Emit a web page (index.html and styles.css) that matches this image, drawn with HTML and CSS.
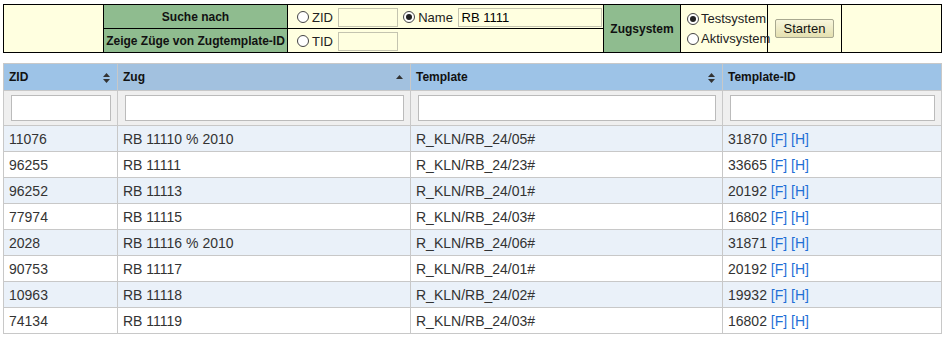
FILE: index.html
```html
<!DOCTYPE html>
<html lang="de">

<head>
    <meta charset="UTF-8">
    <title>Zugsuche</title>
    <link rel="stylesheet" href="styles.css">
</head>

<body>
    <table class="search">
        <colgroup>
            <col style="width: 100px">
            <col style="width: 184px">
            <col style="width: 316px">
            <col style="width: 77px">
            <col style="width: 87px">
            <col style="width: 74px">
            <col style="width: 100px">
        </colgroup>
        <tr>
            <td rowspan="2"></td>
            <td class="label">Suche nach</td>
            <td class="choice">
                <label class="opt"><input type="radio" name="mode">ZID</label>
                <input type="text" class="field small">
                <label class="opt name-opt"><input type="radio" name="mode" checked>Name</label>
                <input type="text" class="field wide" value="RB 1111">
            </td>
            <td class="label" rowspan="2">Zugsystem</td>
            <td class="system" rowspan="2">
                <label class="opt"><input type="radio" name="sys" checked>Testsystem</label>
                <label class="opt"><input type="radio" name="sys">Aktivsystem</label>
            </td>
            <td class="start" rowspan="2"><button>Starten</button></td>
            <td rowspan="2"></td>
        </tr>
        <tr>
            <td class="label">Zeige Züge von Zugtemplate-ID</td>
            <td class="choice">
                <label class="opt"><input type="radio" name="mode">TID</label>
                <input type="text" class="field small">
            </td>
        </tr>
    </table>

    <table class="results">
        <colgroup>
            <col style="width: 114px">
            <col style="width: 293px">
            <col style="width: 312px">
            <col style="width: 219px">
        </colgroup>
        <thead>
            <tr class="head">
                <th><span>ZID</span><svg class="sort" width="7" height="10" viewBox="0 0 7 10"><path d="M3.5 0 L7 4 L0 4 Z M0 6 L7 6 L3.5 10 Z" /></svg></th>
                <th class="sorted"><span>Zug</span><svg class="sort" width="7" height="10" viewBox="0 0 7 10"><path d="M3.5 2 L7 6 L0 6 Z" /></svg></th>
                <th><span>Template</span><svg class="sort" width="7" height="10" viewBox="0 0 7 10"><path d="M3.5 0 L7 4 L0 4 Z M0 6 L7 6 L3.5 10 Z" /></svg></th>
                <th><span>Template-ID</span></th>
            </tr>
            <tr class="filter">
                <td><input type="text"></td>
                <td><input type="text"></td>
                <td><input type="text"></td>
                <td><input type="text"></td>
            </tr>
        </thead>
        <tbody id="rows"></tbody>
    </table>

    <script>
        const trains = [
            ['11076', 'RB 11110 % 2010', 'R_KLN/RB_24/05#', '31870'],
            ['96255', 'RB 11111', 'R_KLN/RB_24/23#', '33665'],
            ['96252', 'RB 11113', 'R_KLN/RB_24/01#', '20192'],
            ['77974', 'RB 11115', 'R_KLN/RB_24/03#', '16802'],
            ['2028', 'RB 11116 % 2010', 'R_KLN/RB_24/06#', '31871'],
            ['90753', 'RB 11117', 'R_KLN/RB_24/01#', '20192'],
            ['10963', 'RB 11118', 'R_KLN/RB_24/02#', '19932'],
            ['74134', 'RB 11119', 'R_KLN/RB_24/03#', '16802']
        ];

        const rows = document.getElementById('rows');
        trains.forEach(train => {
            const tr = document.createElement('tr');
            tr.innerHTML = `<td>${train[0]}</td><td>${train[1]}</td><td>${train[2]}</td>` +
                `<td>${train[3]} <a href="#">[F]</a> <a href="#">[H]</a></td>`;
            rows.appendChild(tr);
        });
    </script>
</body>

</html>
```

FILE: styles.css
```css
* {
    box-sizing: border-box;
}

body {
    margin: 3px;
    font-family: 'Liberation Sans', Arial, sans-serif;
    color: #222;
    background-color: white;
}

table {
    border-collapse: collapse;
    table-layout: fixed;
    width: 938px;
}

/* Search bar */

.search {
    border: 1px solid #000;
    margin-top: 1px;
}

.search td {
    background-color: #ffffe0;
    border: 1px solid #000;
    height: 24px;
    padding: 0;
    font-size: 13px;
    white-space: nowrap;
}

.search .label {
    background-color: #8fbc8f;
    font-size: 12px;
    font-weight: bold;
    text-align: center;
    color: #111;
}

.search .choice {
    padding-left: 9px;
    line-height: 19px;
}

.choice .opt {
    display: inline-flex;
    align-items: center;
    vertical-align: middle;
}

.name-opt {
    margin-left: 2px;
}

.opt input {
    appearance: none;
    width: 12px;
    height: 12px;
    margin: 0 3px 0 0;
    border: 1px solid #444;
    border-radius: 50%;
    background-color: #fff;
    position: relative;
    flex: none;
}

.opt input:checked::after {
    content: '';
    position: absolute;
    left: 2px;
    top: 2px;
    width: 6px;
    height: 6px;
    border-radius: 50%;
    background-color: #222;
}

.field {
    height: 19px;
    border: 1px solid #c4c4b0;
    background-color: #ffffe0;
    font-family: 'Liberation Sans', Arial, sans-serif;
    font-size: 13px;
    padding: 0 3px;
    vertical-align: middle;
    margin: 0 0 0 1px;
}

.field.small {
    width: 60px;
}

.field.wide {
    width: 144px;
}

.search .system {
    padding-left: 6px;
}

.system .opt {
    display: flex;
    align-items: center;
    line-height: 20px;
}

.system .opt input {
    margin-right: 2px;
}

.start {
    text-align: center;
}

.start button {
    width: 59px;
    height: 19px;
    padding: 0;
    font-family: 'Liberation Sans', Arial, sans-serif;
    font-size: 13px;
    color: #111;
    border: 1px solid #a8a890;
    border-radius: 2px;
    background: linear-gradient(#f8f6dc, #e4e0b0);
}

/* Result table */

.results {
    margin-top: 10px;
    border: 1px solid #c8c8c8;
}

.results th,
.results td {
    border: 1px solid #c8c8c8;
    text-align: left;
}

.head th {
    background-color: #9dc3e7;
    font-size: 12px;
    font-weight: bold;
    height: 27px;
    padding: 0 6px 0 5px;
    color: #111;
    position: relative;
}

.head th.sorted {
    background-color: #a2c1df;
}

.sort {
    position: absolute;
    right: 7px;
    top: 9px;
    fill: #333;
}

.filter td {
    background-color: #efefef;
    height: 35px;
    padding: 0 6px 0 7px;
}

.filter input {
    width: 100%;
    height: 26px;
    border: 1px solid #bbb;
    background-color: #fff;
    display: block;
}

.results tbody td {
    height: 26px;
    padding: 0 5px;
    font-size: 14px;
    color: #333;
}

.results tbody tr:nth-child(odd) td {
    background-color: #eaf1f9;
}

.results a {
    color: #1f6fd6;
    text-decoration: none;
}
```
